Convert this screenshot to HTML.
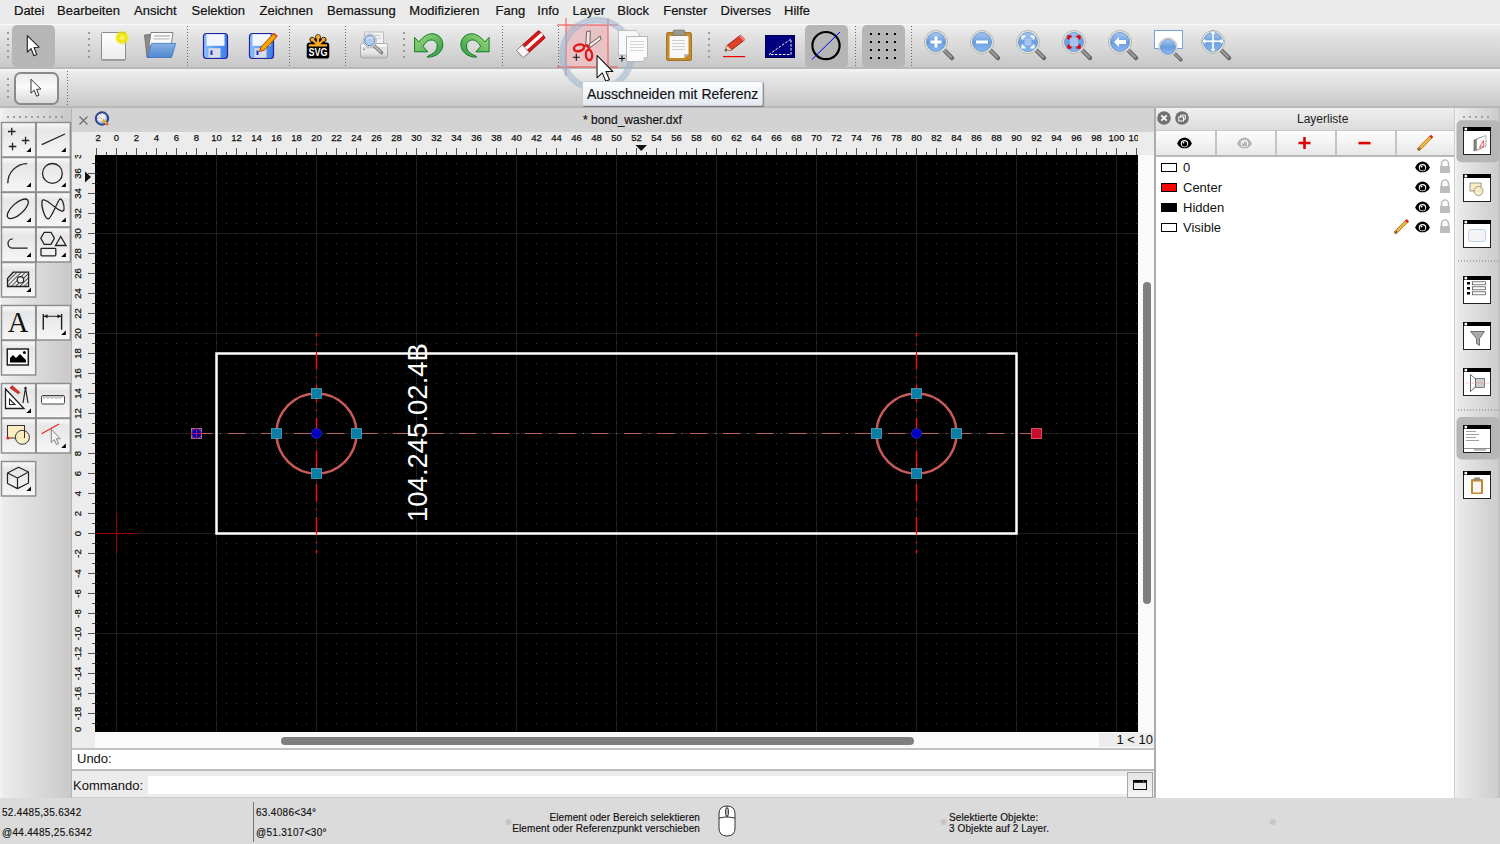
<!DOCTYPE html><html><head><meta charset="utf-8"><title>QCAD</title><style>
*{margin:0;padding:0;box-sizing:border-box}
html,body{width:1500px;height:844px;overflow:hidden;background:#ececec;font-family:"Liberation Sans",sans-serif;color:#1a1a1a}
.a{position:absolute}
.t{position:absolute;white-space:nowrap;line-height:1}
svg{position:absolute;overflow:visible}
</style></head><body>
<div class="a" style="left:0;top:0;width:1500px;height:24px;background:#ebebeb"></div>
<div class="t" style="left:14px;top:4px;font-size:13px;color:#111;-webkit-text-stroke:.2px #111">Datei</div>
<div class="t" style="left:57px;top:4px;font-size:13px;color:#111;-webkit-text-stroke:.2px #111">Bearbeiten</div>
<div class="t" style="left:134px;top:4px;font-size:13px;color:#111;-webkit-text-stroke:.2px #111">Ansicht</div>
<div class="t" style="left:191.5px;top:4px;font-size:13px;color:#111;-webkit-text-stroke:.2px #111">Selektion</div>
<div class="t" style="left:259.5px;top:4px;font-size:13px;color:#111;-webkit-text-stroke:.2px #111">Zeichnen</div>
<div class="t" style="left:327px;top:4px;font-size:13px;color:#111;-webkit-text-stroke:.2px #111">Bemassung</div>
<div class="t" style="left:409.3px;top:4px;font-size:13px;color:#111;-webkit-text-stroke:.2px #111">Modifizieren</div>
<div class="t" style="left:495.5px;top:4px;font-size:13px;color:#111;-webkit-text-stroke:.2px #111">Fang</div>
<div class="t" style="left:537.3px;top:4px;font-size:13px;color:#111;-webkit-text-stroke:.2px #111">Info</div>
<div class="t" style="left:572.5px;top:4px;font-size:13px;color:#111;-webkit-text-stroke:.2px #111">Layer</div>
<div class="t" style="left:617.3px;top:4px;font-size:13px;color:#111;-webkit-text-stroke:.2px #111">Block</div>
<div class="t" style="left:663.2px;top:4px;font-size:13px;color:#111;-webkit-text-stroke:.2px #111">Fenster</div>
<div class="t" style="left:720.5px;top:4px;font-size:13px;color:#111;-webkit-text-stroke:.2px #111">Diverses</div>
<div class="t" style="left:784px;top:4px;font-size:13px;color:#111;-webkit-text-stroke:.2px #111">Hilfe</div>
<div class="a" style="left:0;top:24px;width:1500px;height:45px;background:linear-gradient(#eeeeee,#e3e3e3 25%,#c8c8c8);border-top:1px solid #f8f8f8;border-bottom:2px solid #b9b9b9"></div>
<div class="a" style="left:0;top:69px;width:1500px;height:39px;background:linear-gradient(#f4f4f4,#eaeaea 12%,#c9c9c9);border-bottom:2px solid #b8b8b8"></div>
<div class="a" style="left:0;top:108px;width:72px;height:690px;background:linear-gradient(90deg,#f4f4f4 0,#ececec 4%,#cacaca 97%);border-right:1px solid #b6b6b6"></div>
<div class="a" style="left:72px;top:108px;width:1082px;height:24px;background:#d3d3d3"></div>
<div class="t" style="left:583px;top:114px;font-size:12px;color:#111;-webkit-text-stroke:.15px #111">* bond_washer.dxf</div>
<div class="a" style="left:72px;top:132px;width:1082px;height:23px;background:#ececec"></div>
<div class="a" style="left:72px;top:155px;width:23px;height:593px;background:#ececec"></div>
<div class="a" style="left:1138px;top:155px;width:16px;height:578px;background:#fafafa"></div>
<div class="a" style="left:95px;top:732px;width:1059px;height:17px;background:#fafafa"></div>
<div class="a" style="left:281px;top:737px;width:633px;height:8px;border-radius:4px;background:#7f7f7f"></div>
<div class="a" style="left:1143px;top:282px;width:8px;height:322px;border-radius:4px;background:#7f7f7f"></div>
<div class="a" style="left:1099px;top:733px;width:55px;height:14px;background:#ececec"></div>
<div class="t" style="left:1090px;width:63px;text-align:right;top:733px;font-size:13px;color:#111">1 &lt; 10</div>
<div class="a" style="left:72px;top:748px;width:1082px;height:2px;background:#c2c2c2"></div>
<div class="a" style="left:72px;top:750px;width:1082px;height:21px;background:#fff;border-bottom:2px solid #bdbdbd"></div>
<div class="t" style="left:77px;top:752px;font-size:13px;color:#111">Undo:</div>
<div class="a" style="left:72px;top:771px;width:1082px;height:27px;background:#ececec;border-bottom:1px solid #cbcbcb"></div>
<div class="t" style="left:73px;top:779px;font-size:13px;color:#111">Kommando:</div>
<div class="a" style="left:148px;top:776px;width:979px;height:18px;background:#fff"></div>
<div class="a" style="left:1127px;top:772px;width:26px;height:26px;background:linear-gradient(#e4e4e4,#f4f4f4);border:1.5px solid #a6a6a6"></div>
<div class="a" style="left:1154px;top:108px;width:2px;height:690px;background:#acacac"></div>
<svg class="a" style="left:95px;top:155px;overflow:hidden" width="1043" height="577" viewBox="95 155 1043 577"><defs><pattern id="dots" x="116" y="533" width="10" height="10" patternUnits="userSpaceOnUse"><rect x="0" y="0" width="1" height="1" fill="#3e3e3e"/></pattern></defs><rect x="95" y="155" width="1043" height="577" fill="#000"/><rect x="116" y="155" width="1" height="577" fill="#1c1c1c"/><rect x="216" y="155" width="1" height="577" fill="#1c1c1c"/><rect x="316" y="155" width="1" height="577" fill="#1c1c1c"/><rect x="416" y="155" width="1" height="577" fill="#1c1c1c"/><rect x="516" y="155" width="1" height="577" fill="#1c1c1c"/><rect x="616" y="155" width="1" height="577" fill="#1c1c1c"/><rect x="716" y="155" width="1" height="577" fill="#1c1c1c"/><rect x="816" y="155" width="1" height="577" fill="#1c1c1c"/><rect x="916" y="155" width="1" height="577" fill="#1c1c1c"/><rect x="1016" y="155" width="1" height="577" fill="#1c1c1c"/><rect x="1116" y="155" width="1" height="577" fill="#1c1c1c"/><rect x="95" y="733" width="1043" height="1" fill="#1c1c1c"/><rect x="95" y="633" width="1043" height="1" fill="#1c1c1c"/><rect x="95" y="533" width="1043" height="1" fill="#1c1c1c"/><rect x="95" y="433" width="1043" height="1" fill="#1c1c1c"/><rect x="95" y="333" width="1043" height="1" fill="#1c1c1c"/><rect x="95" y="233" width="1043" height="1" fill="#1c1c1c"/><rect x="95" y="155" width="1043" height="577" fill="url(#dots)"/><rect x="96" y="533" width="40" height="1" fill="#a00000"/><rect x="116" y="513" width="1" height="40" fill="#a00000"/><rect x="216.5" y="353.5" width="800" height="180" fill="none" stroke="#fff" stroke-width="2.5"/><line x1="196" y1="433.5" x2="1036" y2="433.5" stroke="#b86262" stroke-width="1.1" stroke-dasharray="17.6,7.2,1.2,7" stroke-dashoffset="1"/><line x1="316.5" y1="333" x2="316.5" y2="553" stroke="#ff1010" stroke-width="1.4" stroke-dasharray="17.6,7.2,1.2,7" stroke-dashoffset="14"/><circle cx="316.5" cy="433.5" r="40" fill="none" stroke="#c85a5a" stroke-width="2.5"/><rect x="271.5" y="428.5" width="10" height="10" fill="#0a7fa8" stroke="#5aa0b8" stroke-width="0.8"/><rect x="351.5" y="428.5" width="10" height="10" fill="#0a7fa8" stroke="#5aa0b8" stroke-width="0.8"/><rect x="311.5" y="388.5" width="10" height="10" fill="#0a7fa8" stroke="#5aa0b8" stroke-width="0.8"/><rect x="311.5" y="468.5" width="10" height="10" fill="#0a7fa8" stroke="#5aa0b8" stroke-width="0.8"/><circle cx="316.5" cy="433.5" r="5" fill="#0000c0" stroke="#3a3ae0" stroke-width="0.6"/><line x1="916.5" y1="333" x2="916.5" y2="553" stroke="#ff1010" stroke-width="1.4" stroke-dasharray="17.6,7.2,1.2,7" stroke-dashoffset="14"/><circle cx="916.5" cy="433.5" r="40" fill="none" stroke="#c85a5a" stroke-width="2.5"/><rect x="871.5" y="428.5" width="10" height="10" fill="#0a7fa8" stroke="#5aa0b8" stroke-width="0.8"/><rect x="951.5" y="428.5" width="10" height="10" fill="#0a7fa8" stroke="#5aa0b8" stroke-width="0.8"/><rect x="911.5" y="388.5" width="10" height="10" fill="#0a7fa8" stroke="#5aa0b8" stroke-width="0.8"/><rect x="911.5" y="468.5" width="10" height="10" fill="#0a7fa8" stroke="#5aa0b8" stroke-width="0.8"/><circle cx="916.5" cy="433.5" r="5" fill="#0000c0" stroke="#3a3ae0" stroke-width="0.6"/><rect x="191.5" y="428.5" width="10" height="10" fill="#0000c0" stroke="#8a92c8" stroke-width="0.9"/><circle cx="196.5" cy="433.5" r="5" fill="none" stroke="#e02828" stroke-width="1"/><path d="M196.5 429v9M192 433.5h9" stroke="#a81060" stroke-width="1"/><rect x="1031.5" y="428.5" width="10" height="10" fill="#c8102e" stroke="#d85060" stroke-width="1"/><text transform="translate(427,522) rotate(-90)" font-family="Liberation Sans" font-size="27.5" fill="#fff">104.245.02.4B</text></svg>
<svg class="a" style="left:95px;top:132px;overflow:hidden" width="1043" height="23" viewBox="95 132 1043 23"><rect x="76.0" y="148" width="1" height="7" fill="#555"/><text x="76.5" y="141" font-size="9.5" text-anchor="middle" fill="#111" stroke="#111" stroke-width=".25">-4</text><rect x="86.0" y="152" width="1" height="3" fill="#555"/><rect x="96.0" y="148" width="1" height="7" fill="#555"/><text x="96.5" y="141" font-size="9.5" text-anchor="middle" fill="#111" stroke="#111" stroke-width=".25">-2</text><rect x="106.0" y="152" width="1" height="3" fill="#555"/><rect x="116.0" y="148" width="1" height="7" fill="#555"/><text x="116.5" y="141" font-size="9.5" text-anchor="middle" fill="#111" stroke="#111" stroke-width=".25">0</text><rect x="126.0" y="152" width="1" height="3" fill="#555"/><rect x="136.0" y="148" width="1" height="7" fill="#555"/><text x="136.5" y="141" font-size="9.5" text-anchor="middle" fill="#111" stroke="#111" stroke-width=".25">2</text><rect x="146.0" y="152" width="1" height="3" fill="#555"/><rect x="156.0" y="148" width="1" height="7" fill="#555"/><text x="156.5" y="141" font-size="9.5" text-anchor="middle" fill="#111" stroke="#111" stroke-width=".25">4</text><rect x="166.0" y="152" width="1" height="3" fill="#555"/><rect x="176.0" y="148" width="1" height="7" fill="#555"/><text x="176.5" y="141" font-size="9.5" text-anchor="middle" fill="#111" stroke="#111" stroke-width=".25">6</text><rect x="186.0" y="152" width="1" height="3" fill="#555"/><rect x="196.0" y="148" width="1" height="7" fill="#555"/><text x="196.5" y="141" font-size="9.5" text-anchor="middle" fill="#111" stroke="#111" stroke-width=".25">8</text><rect x="206.0" y="152" width="1" height="3" fill="#555"/><rect x="216.0" y="148" width="1" height="7" fill="#555"/><text x="216.5" y="141" font-size="9.5" text-anchor="middle" fill="#111" stroke="#111" stroke-width=".25">10</text><rect x="226.0" y="152" width="1" height="3" fill="#555"/><rect x="236.0" y="148" width="1" height="7" fill="#555"/><text x="236.5" y="141" font-size="9.5" text-anchor="middle" fill="#111" stroke="#111" stroke-width=".25">12</text><rect x="246.0" y="152" width="1" height="3" fill="#555"/><rect x="256.0" y="148" width="1" height="7" fill="#555"/><text x="256.5" y="141" font-size="9.5" text-anchor="middle" fill="#111" stroke="#111" stroke-width=".25">14</text><rect x="266.0" y="152" width="1" height="3" fill="#555"/><rect x="276.0" y="148" width="1" height="7" fill="#555"/><text x="276.5" y="141" font-size="9.5" text-anchor="middle" fill="#111" stroke="#111" stroke-width=".25">16</text><rect x="286.0" y="152" width="1" height="3" fill="#555"/><rect x="296.0" y="148" width="1" height="7" fill="#555"/><text x="296.5" y="141" font-size="9.5" text-anchor="middle" fill="#111" stroke="#111" stroke-width=".25">18</text><rect x="306.0" y="152" width="1" height="3" fill="#555"/><rect x="316.0" y="148" width="1" height="7" fill="#555"/><text x="316.5" y="141" font-size="9.5" text-anchor="middle" fill="#111" stroke="#111" stroke-width=".25">20</text><rect x="326.0" y="152" width="1" height="3" fill="#555"/><rect x="336.0" y="148" width="1" height="7" fill="#555"/><text x="336.5" y="141" font-size="9.5" text-anchor="middle" fill="#111" stroke="#111" stroke-width=".25">22</text><rect x="346.0" y="152" width="1" height="3" fill="#555"/><rect x="356.0" y="148" width="1" height="7" fill="#555"/><text x="356.5" y="141" font-size="9.5" text-anchor="middle" fill="#111" stroke="#111" stroke-width=".25">24</text><rect x="366.0" y="152" width="1" height="3" fill="#555"/><rect x="376.0" y="148" width="1" height="7" fill="#555"/><text x="376.5" y="141" font-size="9.5" text-anchor="middle" fill="#111" stroke="#111" stroke-width=".25">26</text><rect x="386.0" y="152" width="1" height="3" fill="#555"/><rect x="396.0" y="148" width="1" height="7" fill="#555"/><text x="396.5" y="141" font-size="9.5" text-anchor="middle" fill="#111" stroke="#111" stroke-width=".25">28</text><rect x="406.0" y="152" width="1" height="3" fill="#555"/><rect x="416.0" y="148" width="1" height="7" fill="#555"/><text x="416.5" y="141" font-size="9.5" text-anchor="middle" fill="#111" stroke="#111" stroke-width=".25">30</text><rect x="426.0" y="152" width="1" height="3" fill="#555"/><rect x="436.0" y="148" width="1" height="7" fill="#555"/><text x="436.5" y="141" font-size="9.5" text-anchor="middle" fill="#111" stroke="#111" stroke-width=".25">32</text><rect x="446.0" y="152" width="1" height="3" fill="#555"/><rect x="456.0" y="148" width="1" height="7" fill="#555"/><text x="456.5" y="141" font-size="9.5" text-anchor="middle" fill="#111" stroke="#111" stroke-width=".25">34</text><rect x="466.0" y="152" width="1" height="3" fill="#555"/><rect x="476.0" y="148" width="1" height="7" fill="#555"/><text x="476.5" y="141" font-size="9.5" text-anchor="middle" fill="#111" stroke="#111" stroke-width=".25">36</text><rect x="486.0" y="152" width="1" height="3" fill="#555"/><rect x="496.0" y="148" width="1" height="7" fill="#555"/><text x="496.5" y="141" font-size="9.5" text-anchor="middle" fill="#111" stroke="#111" stroke-width=".25">38</text><rect x="506.0" y="152" width="1" height="3" fill="#555"/><rect x="516.0" y="148" width="1" height="7" fill="#555"/><text x="516.5" y="141" font-size="9.5" text-anchor="middle" fill="#111" stroke="#111" stroke-width=".25">40</text><rect x="526.0" y="152" width="1" height="3" fill="#555"/><rect x="536.0" y="148" width="1" height="7" fill="#555"/><text x="536.5" y="141" font-size="9.5" text-anchor="middle" fill="#111" stroke="#111" stroke-width=".25">42</text><rect x="546.0" y="152" width="1" height="3" fill="#555"/><rect x="556.0" y="148" width="1" height="7" fill="#555"/><text x="556.5" y="141" font-size="9.5" text-anchor="middle" fill="#111" stroke="#111" stroke-width=".25">44</text><rect x="566.0" y="152" width="1" height="3" fill="#555"/><rect x="576.0" y="148" width="1" height="7" fill="#555"/><text x="576.5" y="141" font-size="9.5" text-anchor="middle" fill="#111" stroke="#111" stroke-width=".25">46</text><rect x="586.0" y="152" width="1" height="3" fill="#555"/><rect x="596.0" y="148" width="1" height="7" fill="#555"/><text x="596.5" y="141" font-size="9.5" text-anchor="middle" fill="#111" stroke="#111" stroke-width=".25">48</text><rect x="606.0" y="152" width="1" height="3" fill="#555"/><rect x="616.0" y="148" width="1" height="7" fill="#555"/><text x="616.5" y="141" font-size="9.5" text-anchor="middle" fill="#111" stroke="#111" stroke-width=".25">50</text><rect x="626.0" y="152" width="1" height="3" fill="#555"/><rect x="636.0" y="148" width="1" height="7" fill="#555"/><text x="636.5" y="141" font-size="9.5" text-anchor="middle" fill="#111" stroke="#111" stroke-width=".25">52</text><rect x="646.0" y="152" width="1" height="3" fill="#555"/><rect x="656.0" y="148" width="1" height="7" fill="#555"/><text x="656.5" y="141" font-size="9.5" text-anchor="middle" fill="#111" stroke="#111" stroke-width=".25">54</text><rect x="666.0" y="152" width="1" height="3" fill="#555"/><rect x="676.0" y="148" width="1" height="7" fill="#555"/><text x="676.5" y="141" font-size="9.5" text-anchor="middle" fill="#111" stroke="#111" stroke-width=".25">56</text><rect x="686.0" y="152" width="1" height="3" fill="#555"/><rect x="696.0" y="148" width="1" height="7" fill="#555"/><text x="696.5" y="141" font-size="9.5" text-anchor="middle" fill="#111" stroke="#111" stroke-width=".25">58</text><rect x="706.0" y="152" width="1" height="3" fill="#555"/><rect x="716.0" y="148" width="1" height="7" fill="#555"/><text x="716.5" y="141" font-size="9.5" text-anchor="middle" fill="#111" stroke="#111" stroke-width=".25">60</text><rect x="726.0" y="152" width="1" height="3" fill="#555"/><rect x="736.0" y="148" width="1" height="7" fill="#555"/><text x="736.5" y="141" font-size="9.5" text-anchor="middle" fill="#111" stroke="#111" stroke-width=".25">62</text><rect x="746.0" y="152" width="1" height="3" fill="#555"/><rect x="756.0" y="148" width="1" height="7" fill="#555"/><text x="756.5" y="141" font-size="9.5" text-anchor="middle" fill="#111" stroke="#111" stroke-width=".25">64</text><rect x="766.0" y="152" width="1" height="3" fill="#555"/><rect x="776.0" y="148" width="1" height="7" fill="#555"/><text x="776.5" y="141" font-size="9.5" text-anchor="middle" fill="#111" stroke="#111" stroke-width=".25">66</text><rect x="786.0" y="152" width="1" height="3" fill="#555"/><rect x="796.0" y="148" width="1" height="7" fill="#555"/><text x="796.5" y="141" font-size="9.5" text-anchor="middle" fill="#111" stroke="#111" stroke-width=".25">68</text><rect x="806.0" y="152" width="1" height="3" fill="#555"/><rect x="816.0" y="148" width="1" height="7" fill="#555"/><text x="816.5" y="141" font-size="9.5" text-anchor="middle" fill="#111" stroke="#111" stroke-width=".25">70</text><rect x="826.0" y="152" width="1" height="3" fill="#555"/><rect x="836.0" y="148" width="1" height="7" fill="#555"/><text x="836.5" y="141" font-size="9.5" text-anchor="middle" fill="#111" stroke="#111" stroke-width=".25">72</text><rect x="846.0" y="152" width="1" height="3" fill="#555"/><rect x="856.0" y="148" width="1" height="7" fill="#555"/><text x="856.5" y="141" font-size="9.5" text-anchor="middle" fill="#111" stroke="#111" stroke-width=".25">74</text><rect x="866.0" y="152" width="1" height="3" fill="#555"/><rect x="876.0" y="148" width="1" height="7" fill="#555"/><text x="876.5" y="141" font-size="9.5" text-anchor="middle" fill="#111" stroke="#111" stroke-width=".25">76</text><rect x="886.0" y="152" width="1" height="3" fill="#555"/><rect x="896.0" y="148" width="1" height="7" fill="#555"/><text x="896.5" y="141" font-size="9.5" text-anchor="middle" fill="#111" stroke="#111" stroke-width=".25">78</text><rect x="906.0" y="152" width="1" height="3" fill="#555"/><rect x="916.0" y="148" width="1" height="7" fill="#555"/><text x="916.5" y="141" font-size="9.5" text-anchor="middle" fill="#111" stroke="#111" stroke-width=".25">80</text><rect x="926.0" y="152" width="1" height="3" fill="#555"/><rect x="936.0" y="148" width="1" height="7" fill="#555"/><text x="936.5" y="141" font-size="9.5" text-anchor="middle" fill="#111" stroke="#111" stroke-width=".25">82</text><rect x="946.0" y="152" width="1" height="3" fill="#555"/><rect x="956.0" y="148" width="1" height="7" fill="#555"/><text x="956.5" y="141" font-size="9.5" text-anchor="middle" fill="#111" stroke="#111" stroke-width=".25">84</text><rect x="966.0" y="152" width="1" height="3" fill="#555"/><rect x="976.0" y="148" width="1" height="7" fill="#555"/><text x="976.5" y="141" font-size="9.5" text-anchor="middle" fill="#111" stroke="#111" stroke-width=".25">86</text><rect x="986.0" y="152" width="1" height="3" fill="#555"/><rect x="996.0" y="148" width="1" height="7" fill="#555"/><text x="996.5" y="141" font-size="9.5" text-anchor="middle" fill="#111" stroke="#111" stroke-width=".25">88</text><rect x="1006.0" y="152" width="1" height="3" fill="#555"/><rect x="1016.0" y="148" width="1" height="7" fill="#555"/><text x="1016.5" y="141" font-size="9.5" text-anchor="middle" fill="#111" stroke="#111" stroke-width=".25">90</text><rect x="1026.0" y="152" width="1" height="3" fill="#555"/><rect x="1036.0" y="148" width="1" height="7" fill="#555"/><text x="1036.5" y="141" font-size="9.5" text-anchor="middle" fill="#111" stroke="#111" stroke-width=".25">92</text><rect x="1046.0" y="152" width="1" height="3" fill="#555"/><rect x="1056.0" y="148" width="1" height="7" fill="#555"/><text x="1056.5" y="141" font-size="9.5" text-anchor="middle" fill="#111" stroke="#111" stroke-width=".25">94</text><rect x="1066.0" y="152" width="1" height="3" fill="#555"/><rect x="1076.0" y="148" width="1" height="7" fill="#555"/><text x="1076.5" y="141" font-size="9.5" text-anchor="middle" fill="#111" stroke="#111" stroke-width=".25">96</text><rect x="1086.0" y="152" width="1" height="3" fill="#555"/><rect x="1096.0" y="148" width="1" height="7" fill="#555"/><text x="1096.5" y="141" font-size="9.5" text-anchor="middle" fill="#111" stroke="#111" stroke-width=".25">98</text><rect x="1106.0" y="152" width="1" height="3" fill="#555"/><rect x="1116.0" y="148" width="1" height="7" fill="#555"/><text x="1116.5" y="141" font-size="9.5" text-anchor="middle" fill="#111" stroke="#111" stroke-width=".25">100</text><rect x="1126.0" y="152" width="1" height="3" fill="#555"/><rect x="1136.0" y="148" width="1" height="7" fill="#555"/><text x="1136.5" y="141" font-size="9.5" text-anchor="middle" fill="#111" stroke="#111" stroke-width=".25">102</text><rect x="1146.0" y="152" width="1" height="3" fill="#555"/><rect x="1156.0" y="148" width="1" height="7" fill="#555"/><text x="1156.5" y="141" font-size="9.5" text-anchor="middle" fill="#111" stroke="#111" stroke-width=".25">104</text><rect x="1166.0" y="152" width="1" height="3" fill="#555"/></svg><svg class="a" style="left:72px;top:155px;overflow:hidden" width="23" height="577" viewBox="72 155 23 577"><rect x="88" y="773.0" width="7" height="1" fill="#555"/><text transform="translate(81,773.5) rotate(-90)" font-size="9.5" text-anchor="middle" fill="#111" stroke="#111" stroke-width=".25">-24</text><rect x="92" y="763.0" width="3" height="1" fill="#555"/><rect x="88" y="753.0" width="7" height="1" fill="#555"/><text transform="translate(81,753.5) rotate(-90)" font-size="9.5" text-anchor="middle" fill="#111" stroke="#111" stroke-width=".25">-22</text><rect x="92" y="743.0" width="3" height="1" fill="#555"/><rect x="88" y="733.0" width="7" height="1" fill="#555"/><text transform="translate(81,733.5) rotate(-90)" font-size="9.5" text-anchor="middle" fill="#111" stroke="#111" stroke-width=".25">-20</text><rect x="92" y="723.0" width="3" height="1" fill="#555"/><rect x="88" y="713.0" width="7" height="1" fill="#555"/><text transform="translate(81,713.5) rotate(-90)" font-size="9.5" text-anchor="middle" fill="#111" stroke="#111" stroke-width=".25">-18</text><rect x="92" y="703.0" width="3" height="1" fill="#555"/><rect x="88" y="693.0" width="7" height="1" fill="#555"/><text transform="translate(81,693.5) rotate(-90)" font-size="9.5" text-anchor="middle" fill="#111" stroke="#111" stroke-width=".25">-16</text><rect x="92" y="683.0" width="3" height="1" fill="#555"/><rect x="88" y="673.0" width="7" height="1" fill="#555"/><text transform="translate(81,673.5) rotate(-90)" font-size="9.5" text-anchor="middle" fill="#111" stroke="#111" stroke-width=".25">-14</text><rect x="92" y="663.0" width="3" height="1" fill="#555"/><rect x="88" y="653.0" width="7" height="1" fill="#555"/><text transform="translate(81,653.5) rotate(-90)" font-size="9.5" text-anchor="middle" fill="#111" stroke="#111" stroke-width=".25">-12</text><rect x="92" y="643.0" width="3" height="1" fill="#555"/><rect x="88" y="633.0" width="7" height="1" fill="#555"/><text transform="translate(81,633.5) rotate(-90)" font-size="9.5" text-anchor="middle" fill="#111" stroke="#111" stroke-width=".25">-10</text><rect x="92" y="623.0" width="3" height="1" fill="#555"/><rect x="88" y="613.0" width="7" height="1" fill="#555"/><text transform="translate(81,613.5) rotate(-90)" font-size="9.5" text-anchor="middle" fill="#111" stroke="#111" stroke-width=".25">-8</text><rect x="92" y="603.0" width="3" height="1" fill="#555"/><rect x="88" y="593.0" width="7" height="1" fill="#555"/><text transform="translate(81,593.5) rotate(-90)" font-size="9.5" text-anchor="middle" fill="#111" stroke="#111" stroke-width=".25">-6</text><rect x="92" y="583.0" width="3" height="1" fill="#555"/><rect x="88" y="573.0" width="7" height="1" fill="#555"/><text transform="translate(81,573.5) rotate(-90)" font-size="9.5" text-anchor="middle" fill="#111" stroke="#111" stroke-width=".25">-4</text><rect x="92" y="563.0" width="3" height="1" fill="#555"/><rect x="88" y="553.0" width="7" height="1" fill="#555"/><text transform="translate(81,553.5) rotate(-90)" font-size="9.5" text-anchor="middle" fill="#111" stroke="#111" stroke-width=".25">-2</text><rect x="92" y="543.0" width="3" height="1" fill="#555"/><rect x="88" y="533.0" width="7" height="1" fill="#555"/><text transform="translate(81,533.5) rotate(-90)" font-size="9.5" text-anchor="middle" fill="#111" stroke="#111" stroke-width=".25">0</text><rect x="92" y="523.0" width="3" height="1" fill="#555"/><rect x="88" y="513.0" width="7" height="1" fill="#555"/><text transform="translate(81,513.5) rotate(-90)" font-size="9.5" text-anchor="middle" fill="#111" stroke="#111" stroke-width=".25">2</text><rect x="92" y="503.0" width="3" height="1" fill="#555"/><rect x="88" y="493.0" width="7" height="1" fill="#555"/><text transform="translate(81,493.5) rotate(-90)" font-size="9.5" text-anchor="middle" fill="#111" stroke="#111" stroke-width=".25">4</text><rect x="92" y="483.0" width="3" height="1" fill="#555"/><rect x="88" y="473.0" width="7" height="1" fill="#555"/><text transform="translate(81,473.5) rotate(-90)" font-size="9.5" text-anchor="middle" fill="#111" stroke="#111" stroke-width=".25">6</text><rect x="92" y="463.0" width="3" height="1" fill="#555"/><rect x="88" y="453.0" width="7" height="1" fill="#555"/><text transform="translate(81,453.5) rotate(-90)" font-size="9.5" text-anchor="middle" fill="#111" stroke="#111" stroke-width=".25">8</text><rect x="92" y="443.0" width="3" height="1" fill="#555"/><rect x="88" y="433.0" width="7" height="1" fill="#555"/><text transform="translate(81,433.5) rotate(-90)" font-size="9.5" text-anchor="middle" fill="#111" stroke="#111" stroke-width=".25">10</text><rect x="92" y="423.0" width="3" height="1" fill="#555"/><rect x="88" y="413.0" width="7" height="1" fill="#555"/><text transform="translate(81,413.5) rotate(-90)" font-size="9.5" text-anchor="middle" fill="#111" stroke="#111" stroke-width=".25">12</text><rect x="92" y="403.0" width="3" height="1" fill="#555"/><rect x="88" y="393.0" width="7" height="1" fill="#555"/><text transform="translate(81,393.5) rotate(-90)" font-size="9.5" text-anchor="middle" fill="#111" stroke="#111" stroke-width=".25">14</text><rect x="92" y="383.0" width="3" height="1" fill="#555"/><rect x="88" y="373.0" width="7" height="1" fill="#555"/><text transform="translate(81,373.5) rotate(-90)" font-size="9.5" text-anchor="middle" fill="#111" stroke="#111" stroke-width=".25">16</text><rect x="92" y="363.0" width="3" height="1" fill="#555"/><rect x="88" y="353.0" width="7" height="1" fill="#555"/><text transform="translate(81,353.5) rotate(-90)" font-size="9.5" text-anchor="middle" fill="#111" stroke="#111" stroke-width=".25">18</text><rect x="92" y="343.0" width="3" height="1" fill="#555"/><rect x="88" y="333.0" width="7" height="1" fill="#555"/><text transform="translate(81,333.5) rotate(-90)" font-size="9.5" text-anchor="middle" fill="#111" stroke="#111" stroke-width=".25">20</text><rect x="92" y="323.0" width="3" height="1" fill="#555"/><rect x="88" y="313.0" width="7" height="1" fill="#555"/><text transform="translate(81,313.5) rotate(-90)" font-size="9.5" text-anchor="middle" fill="#111" stroke="#111" stroke-width=".25">22</text><rect x="92" y="303.0" width="3" height="1" fill="#555"/><rect x="88" y="293.0" width="7" height="1" fill="#555"/><text transform="translate(81,293.5) rotate(-90)" font-size="9.5" text-anchor="middle" fill="#111" stroke="#111" stroke-width=".25">24</text><rect x="92" y="283.0" width="3" height="1" fill="#555"/><rect x="88" y="273.0" width="7" height="1" fill="#555"/><text transform="translate(81,273.5) rotate(-90)" font-size="9.5" text-anchor="middle" fill="#111" stroke="#111" stroke-width=".25">26</text><rect x="92" y="263.0" width="3" height="1" fill="#555"/><rect x="88" y="253.0" width="7" height="1" fill="#555"/><text transform="translate(81,253.5) rotate(-90)" font-size="9.5" text-anchor="middle" fill="#111" stroke="#111" stroke-width=".25">28</text><rect x="92" y="243.0" width="3" height="1" fill="#555"/><rect x="88" y="233.0" width="7" height="1" fill="#555"/><text transform="translate(81,233.5) rotate(-90)" font-size="9.5" text-anchor="middle" fill="#111" stroke="#111" stroke-width=".25">30</text><rect x="92" y="223.0" width="3" height="1" fill="#555"/><rect x="88" y="213.0" width="7" height="1" fill="#555"/><text transform="translate(81,213.5) rotate(-90)" font-size="9.5" text-anchor="middle" fill="#111" stroke="#111" stroke-width=".25">32</text><rect x="92" y="203.0" width="3" height="1" fill="#555"/><rect x="88" y="193.0" width="7" height="1" fill="#555"/><text transform="translate(81,193.5) rotate(-90)" font-size="9.5" text-anchor="middle" fill="#111" stroke="#111" stroke-width=".25">34</text><rect x="92" y="183.0" width="3" height="1" fill="#555"/><rect x="88" y="173.0" width="7" height="1" fill="#555"/><text transform="translate(81,173.5) rotate(-90)" font-size="9.5" text-anchor="middle" fill="#111" stroke="#111" stroke-width=".25">36</text><rect x="92" y="163.0" width="3" height="1" fill="#555"/><rect x="88" y="153.0" width="7" height="1" fill="#555"/><text transform="translate(81,153.5) rotate(-90)" font-size="9.5" text-anchor="middle" fill="#111" stroke="#111" stroke-width=".25">38</text><rect x="92" y="143.0" width="3" height="1" fill="#555"/></svg><svg class="a" style="left:0;top:0" width="1500" height="844"><path d="M635.5 145h11.5l-5.75 6z" fill="#111"/><path d="M85 171.5v11l6-5.5z" fill="#111"/></svg>
<div class="a" style="left:0;top:798px;width:1500px;height:46px;background:#dbdbdb"></div>
<div class="t" style="left:2px;top:808px;font-size:10px;letter-spacing:.3px;color:#111;-webkit-text-stroke:.15px #111">52.4485,35.6342</div>
<div class="t" style="left:2px;top:828px;font-size:10px;letter-spacing:.3px;color:#111;-webkit-text-stroke:.15px #111">@44.4485,25.6342</div>
<div class="t" style="left:256px;top:808px;font-size:10px;letter-spacing:.3px;color:#111;-webkit-text-stroke:.15px #111">63.4086&lt;34°</div>
<div class="t" style="left:256px;top:828px;font-size:10px;letter-spacing:.3px;color:#111;-webkit-text-stroke:.15px #111">@51.3107&lt;30°</div>
<div class="a" style="left:253px;top:802px;width:1px;height:40px;background:#777"></div>
<div class="t" style="left:400px;top:812px;width:300px;text-align:right;font-size:10px;line-height:11px;letter-spacing:.1px;color:#111;-webkit-text-stroke:.15px #111">Element oder Bereich selektieren<br>Element oder Referenzpunkt verschieben</div>
<div class="t" style="left:949px;top:812px;font-size:10px;line-height:11px;letter-spacing:.1px;color:#111;-webkit-text-stroke:.15px #111">Selektierte Objekte:<br>3 Objekte auf 2 Layer.</div>
<div class="a" style="left:1156px;top:108px;width:298px;height:690px;background:#fff"></div>
<div class="a" style="left:1156px;top:108px;width:298px;height:22px;background:linear-gradient(#efefef,#dcdcdc)"></div>
<div class="t" style="left:1297px;top:113px;font-size:12px;color:#222">Layerliste</div>
<div class="a" style="left:1156px;top:130px;width:298px;height:27px;background:linear-gradient(#fdfdfd,#e8e8e8);border-bottom:2px solid #b8b8b8;border-top:1px solid #c8c8c8"></div>
<div class="a" style="left:1215px;top:130px;width:2px;height:25px;background:#c4c4c4"></div>
<div class="a" style="left:1275px;top:130px;width:2px;height:25px;background:#c4c4c4"></div>
<div class="a" style="left:1335px;top:130px;width:2px;height:25px;background:#c4c4c4"></div>
<div class="a" style="left:1395px;top:130px;width:2px;height:25px;background:#c4c4c4"></div>
<div class="a" style="left:1161px;top:163px;width:16px;height:9px;background:#fff;border:1px solid #000"></div>
<div class="t" style="left:1183px;top:161px;font-size:13px;color:#111">0</div>
<div class="a" style="left:1161px;top:183px;width:16px;height:9px;background:#f00;border:1px solid #000"></div>
<div class="t" style="left:1183px;top:181px;font-size:13px;color:#111">Center</div>
<div class="a" style="left:1161px;top:203px;width:16px;height:9px;background:#000;border:1px solid #000"></div>
<div class="t" style="left:1183px;top:201px;font-size:13px;color:#111">Hidden</div>
<div class="a" style="left:1161px;top:223px;width:16px;height:9px;background:#fff;border:1px solid #000"></div>
<div class="t" style="left:1183px;top:221px;font-size:13px;color:#111">Visible</div>
<div class="a" style="left:1454px;top:108px;width:46px;height:690px;background:linear-gradient(90deg,#f4f4f4 0,#eaeaea 6%,#cccccc 96.5%,#bcbcbc 97%,#bcbcbc 100%);border-left:1px solid #cdcdcd"></div>
<svg class="a" style="left:0;top:0;pointer-events:none" width="1500" height="844" viewBox="0 0 1500 844"><defs><linearGradient id="gMag" x1="0" y1="0" x2="0" y2="1"><stop offset="0" stop-color="#a8c8f0"/><stop offset=".5" stop-color="#6a9ee0"/><stop offset="1" stop-color="#8ab8f0"/></linearGradient><linearGradient id="gGreen" x1="0" y1="0" x2="1" y2="1"><stop offset="0" stop-color="#a0dc80"/><stop offset="1" stop-color="#2f9a3e"/></linearGradient><linearGradient id="gPage" x1="0" y1="0" x2="0" y2="1"><stop offset="0" stop-color="#fff"/><stop offset="1" stop-color="#ececec"/></linearGradient><linearGradient id="gFolder" x1="0" y1="0" x2="0" y2="1"><stop offset="0" stop-color="#8ab2e4"/><stop offset="1" stop-color="#4f86d0"/></linearGradient><linearGradient id="gFloppy" x1="0" y1="0" x2="1" y2="0"><stop offset="0" stop-color="#8ec0ff"/><stop offset=".5" stop-color="#5b9af2"/><stop offset="1" stop-color="#3f7fe8"/></linearGradient><radialGradient id="gGlow"><stop offset="0" stop-color="#fffff0"/><stop offset=".2" stop-color="#f8f040"/><stop offset=".6" stop-color="#eee400"/><stop offset="1" stop-color="#f0e800" stop-opacity="0"/></radialGradient><linearGradient id="gBtn2" x1="0" y1="0" x2="0" y2="1"><stop offset="0" stop-color="#ebebeb"/><stop offset=".45" stop-color="#fafafa"/><stop offset="1" stop-color="#d8d8d8"/></linearGradient></defs><rect x="7" y="32" width="2" height="2" fill="#9a9a9a"/><rect x="7" y="38" width="2" height="2" fill="#9a9a9a"/><rect x="7" y="44" width="2" height="2" fill="#9a9a9a"/><rect x="7" y="50" width="2" height="2" fill="#9a9a9a"/><rect x="7" y="56" width="2" height="2" fill="#9a9a9a"/><rect x="12" y="25" width="43" height="42.5" rx="5" fill="#b6b6b6"/><path d="M27.30,35.60 L27.30,52.10 L31.10,48.60 L33.90,55.80 L36.70,54.60 L34.10,47.50 L39.10,47.20 Z" fill="#fff" stroke="#222" stroke-width="1.10" stroke-linejoin="round"/><rect x="88" y="32" width="2" height="2" fill="#9a9a9a"/><rect x="88" y="38" width="2" height="2" fill="#9a9a9a"/><rect x="88" y="44" width="2" height="2" fill="#9a9a9a"/><rect x="88" y="50" width="2" height="2" fill="#9a9a9a"/><rect x="88" y="56" width="2" height="2" fill="#9a9a9a"/><rect x="101.5" y="32.5" width="24" height="27.5" rx="1" fill="url(#gPage)" stroke="#8a8a8a" stroke-width="1"/><rect x="102" y="59" width="23" height="1.6" fill="#9a9a9a"/><circle cx="122" cy="37.7" r="7.5" fill="url(#gGlow)"/><path d="M144.5,35 L150,34.5 L152,57.5 L147,57.5 Z" fill="#8a8a8a" stroke="#6a6a6a" stroke-width="0.8"/><path d="M151,32.5 L173,32.5 L171,46 L149,46 Z" fill="#fafafa" stroke="#777" stroke-width="0.9"/><rect x="154" y="35.2" width="16" height="1.4" fill="#b8b8b8"/><rect x="153.5" y="38.2" width="16" height="1.4" fill="#c8c8c8"/><path d="M151.5,43.4 L175.7,43.4 L171.5,57.5 L147.2,57.5 Z" fill="url(#gFolder)" stroke="#3f74c0" stroke-width="0.8"/><line x1="187.5" y1="26" x2="187.5" y2="66" stroke="#6a6a6a" stroke-width="1" stroke-dasharray="1,2"/><rect x="203.5" y="33.5" width="24" height="25" rx="3" fill="url(#gFloppy)" stroke="#24249a" stroke-width="1.2"/><rect x="206.5" y="34.2" width="18" height="11.6" fill="#f2f6ff"/><rect x="208.5" y="48.2" width="12" height="9.5" fill="#dcdce6"/><rect x="210.5" y="50.5" width="2" height="4.5" fill="#1030d0"/><line x1="289.5" y1="26" x2="289.5" y2="66" stroke="#6a6a6a" stroke-width="1" stroke-dasharray="1,2"/><rect x="249.5" y="33.5" width="24" height="25" rx="3" fill="url(#gFloppy)" stroke="#24249a" stroke-width="1.2"/><rect x="252.5" y="34.2" width="18" height="11.6" fill="#f2f6ff"/><rect x="254.5" y="48.2" width="12" height="9.5" fill="#dcdce6"/><rect x="256.5" y="50.5" width="2" height="4.5" fill="#1030d0"/><path d="M259.5,51.5 L261,47 L273.5,33.5 L277,36.5 L264.5,50 Z" fill="#f6a800" stroke="#a83000" stroke-width="0.9"/><path d="M273.5,33.5 L277,36.5" stroke="#e84a30" stroke-width="2.2"/><g stroke="#000" stroke-width="5.4" stroke-linecap="round" fill="#000"><path d="M318,45 L318,37 M318,45 L312.3,39.6 M318,45 L323.7,39.6 M309.5,45.3 L326.5,45.3"/></g><path d="M307.5,46 Q307.5,44 309.5,44 L326.5,44 Q328.5,44 328.5,46 L328.5,56 Q328.5,57.8 326.5,57.8 L309.5,57.8 Q307.5,57.8 307.5,56 Z" fill="#000" stroke="#000" stroke-width="1.5"/><g stroke="#f7a828" stroke-width="2.2" stroke-linecap="round"><path d="M318,45 L318,37.5 M318,45 L312.8,40 M318,45 L323.2,40 M309.8,45.4 L326.2,45.4"/></g><circle cx="318" cy="37" r="2.2" fill="#f7a828"/><circle cx="312.4" cy="39.6" r="2" fill="#f7a828"/><circle cx="323.6" cy="39.6" r="2" fill="#f7a828"/><text x="318" y="56" font-family="Liberation Sans" font-weight="bold" font-size="11" text-anchor="middle" fill="#fff" textLength="19" lengthAdjust="spacingAndGlyphs">SVG</text><line x1="345.5" y1="26" x2="345.5" y2="66" stroke="#6a6a6a" stroke-width="1" stroke-dasharray="1,2"/><defs><linearGradient id="gPr" x1="0" y1="0" x2="0" y2="1"><stop offset="0" stop-color="#fbfbfb"/><stop offset=".7" stop-color="#e2e2e2"/><stop offset="1" stop-color="#bdbdbd"/></linearGradient></defs><rect x="364.5" y="32" width="19" height="13" rx="1" fill="#f2f2f2" stroke="#b4b4b4" stroke-width="0.9"/><rect x="372" y="35" width="9" height="1.2" fill="#cfcfcf"/><rect x="372" y="38" width="9" height="1.2" fill="#d8d8d8"/><path d="M360.5,45.5 Q360.5,43.5 362.5,43.5 L385.5,43.5 Q387.5,43.5 387.5,45.5 L387.5,56 Q387.5,58 385.5,58 L362.5,58 Q360.5,58 360.5,56 Z" fill="url(#gPr)" stroke="#a4a4a4" stroke-width="0.9"/><rect x="362" y="47.5" width="24" height="1" fill="#c8c8c8"/><circle cx="364" cy="49.5" r=".8" fill="#777"/><path d="M372,44 L381.5,52.5" stroke="#7a7a7a" stroke-width="3.6" stroke-linecap="round"/><path d="M372,44 L381,52" stroke="#c4c4c4" stroke-width="1.6" stroke-linecap="round"/><circle cx="369.7" cy="40.7" r="6.6" fill="#f0f0f0" stroke="#a8a8a8" stroke-width="0.9"/><circle cx="369.7" cy="40.7" r="5" fill="#b4cdec" stroke="#4f82c8" stroke-width="1"/><path d="M366.5,39 Q369.5,36 373,38.5" fill="none" stroke="#e4eefa" stroke-width="1.2"/><rect x="403" y="32" width="2" height="2" fill="#9a9a9a"/><rect x="403" y="38" width="2" height="2" fill="#9a9a9a"/><rect x="403" y="44" width="2" height="2" fill="#9a9a9a"/><rect x="403" y="50" width="2" height="2" fill="#9a9a9a"/><rect x="403" y="56" width="2" height="2" fill="#9a9a9a"/><path d="M414.6,37.4 L418.8,42 C422.5,37.5 427,33.8 432,33.8 C438.3,33.8 442.8,38.5 442.8,44.6 C442.8,51.5 436.5,57.2 427.2,57.2 C427,56 429.5,55.4 431.5,54.4 C435.3,52.4 437.2,49.5 437.2,46 C437.2,42.5 434.6,40 431,40 C428.2,40 425.6,42 423,46.4 L427.8,51.8 L414.6,51.8 Z" fill="url(#gGreen)" stroke="#0c7a26" stroke-width="1"/><g transform="translate(903.7,0) scale(-1,1)"><path d="M414.6,37.4 L418.8,42 C422.5,37.5 427,33.8 432,33.8 C438.3,33.8 442.8,38.5 442.8,44.6 C442.8,51.5 436.5,57.2 427.2,57.2 C427,56 429.5,55.4 431.5,54.4 C435.3,52.4 437.2,49.5 437.2,46 C437.2,42.5 434.6,40 431,40 C428.2,40 425.6,42 423,46.4 L427.8,51.8 L414.6,51.8 Z" fill="url(#gGreen)" stroke="#0c7a26" stroke-width="1"/></g><line x1="502.5" y1="26" x2="502.5" y2="66" stroke="#6a6a6a" stroke-width="1" stroke-dasharray="1,2"/><ellipse cx="531" cy="56" rx="13" ry="2" fill="#d4d4d4"/><g transform="translate(531,44) rotate(-42)"><rect x="-15" y="-5" width="30" height="10" rx="1.5" fill="#d81818" stroke="#8a1010" stroke-width="0.8"/><rect x="-15" y="-1.6" width="30" height="3.2" fill="#fff"/><rect x="-15" y="-5" width="8" height="10" fill="#f4f4f4" stroke="#8a8a8a" stroke-width="0.8"/></g><line x1="558.5" y1="26" x2="558.5" y2="66" stroke="#6a6a6a" stroke-width="1" stroke-dasharray="1,2"/><rect x="566" y="25" width="42" height="42" fill="#e8c2c5"/><g stroke="#f05a5a" stroke-width="1.3" opacity=".8"><line x1="566" y1="18" x2="566" y2="76"/><line x1="608" y1="18" x2="608" y2="76"/><line x1="557" y1="25" x2="618" y2="25"/><line x1="557" y1="67" x2="618" y2="67"/></g><circle cx="597" cy="54.5" r="34.5" fill="none" stroke="#a2b8d2" stroke-width="7" opacity=".5"/><circle cx="597" cy="54.5" r="33" fill="none" stroke="#8aa6c6" stroke-width="1" opacity=".35"/><circle cx="597" cy="54.5" r="36" fill="none" stroke="#8aa6c6" stroke-width="1" opacity=".35"/><path d="M585.8,44.5 L586.6,31.6 L590.3,30.9 L589.9,46.2 Z" fill="#efe6e6" stroke="#6a5050" stroke-width="0.9" stroke-linejoin="round"/><path d="M589.2,44.2 L600.3,36 L601.1,39.3 L590.2,47.6 Z" fill="#efe6e6" stroke="#6a5050" stroke-width="0.9" stroke-linejoin="round"/><ellipse cx="579" cy="47.8" rx="5.2" ry="3.3" transform="rotate(-15 579 47.8)" fill="none" stroke="#e01818" stroke-width="2.4"/><ellipse cx="589" cy="55" rx="3.1" ry="5.2" transform="rotate(-5 589 55)" fill="none" stroke="#e01818" stroke-width="2.4"/><path d="M583.5,46 L587.5,45.5 L589.5,49.8" fill="none" stroke="#e01818" stroke-width="2.2"/><path d="M572.8,57.3 h7 M576.3,53.8 v7" stroke="#111" stroke-width="1.1"/><path d="M618.5,30.5 L636,30.5 L639,33.5 L639,55 L618.5,55 Z" fill="#f8f8f8" stroke="#b4b4b4" stroke-width="0.8"/><path d="M626.5,36.5 L647.5,36.5 L647.5,57 L643.5,61.5 L626.5,61.5 Z" fill="#fbfbfb" stroke="#a8a8a8" stroke-width="0.8"/><path d="M643.5,61.5 L643.5,57 L647.5,57 Z" fill="#c8c8c8"/><rect x="630" y="41" width="14" height="1" fill="#d4d4d4"/><rect x="630" y="44" width="14" height="1" fill="#d4d4d4"/><rect x="630" y="47" width="14" height="1" fill="#d4d4d4"/><rect x="630" y="50" width="14" height="1" fill="#d4d4d4"/><path d="M619,58.5 h6 M622,55.5 v6" stroke="#111" stroke-width="1.1"/><rect x="666.5" y="32.5" width="25" height="28" rx="1.5" fill="#c48a2a" stroke="#9a6618" stroke-width="0.8"/><path d="M669.5,36 L688.5,36 L688.5,54 L684,58 L669.5,58 Z" fill="#f8f8f8"/><path d="M684,58 L684,54 L688.5,54 Z" fill="#b8b8b8"/><rect x="672" y="40" width="13" height="1" fill="#cfcfcf"/><rect x="672" y="43" width="13" height="1" fill="#cfcfcf"/><rect x="672" y="46" width="13" height="1" fill="#cfcfcf"/><rect x="672" y="49" width="13" height="1" fill="#cfcfcf"/><rect x="673" y="30" width="12" height="5.5" rx="1.5" fill="#9a9a92" stroke="#6a6a62" stroke-width="0.6"/><rect x="708" y="32" width="2" height="2" fill="#9a9a9a"/><rect x="708" y="38" width="2" height="2" fill="#9a9a9a"/><rect x="708" y="44" width="2" height="2" fill="#9a9a9a"/><rect x="708" y="50" width="2" height="2" fill="#9a9a9a"/><rect x="708" y="56" width="2" height="2" fill="#9a9a9a"/><path d="M725,51 L727,45.5 L740,35.5 L744.5,40 L731.5,50 Z" fill="#e04028" stroke="#7a1a0a" stroke-width="0.8"/><path d="M725,51 L727,45.5 L731.5,50 Z" fill="#f0d8b0"/><path d="M725,51 L726,48.5 L727.5,50 Z" fill="#222"/><path d="M740,35.5 L744.5,40" stroke="#f08080" stroke-width="2.5"/><rect x="723" y="56" width="22" height="1.2" fill="#f00000"/><rect x="765.5" y="35.5" width="29" height="22" fill="#000080" stroke="#000050" stroke-width="1"/><path d="M769,54.5 L791,39 L791,54.5 Z" fill="none" stroke="#fff" stroke-width="1" stroke-dasharray="2.5,1.5"/><rect x="805" y="25" width="43" height="42.5" rx="5" fill="#b6b6b6"/><circle cx="826" cy="45.6" r="13.6" fill="none" stroke="#000" stroke-width="2.2"/><line x1="812" y1="59.5" x2="840" y2="32" stroke="#0000ff" stroke-width="1"/><line x1="855.5" y1="26" x2="855.5" y2="66" stroke="#6a6a6a" stroke-width="1" stroke-dasharray="1,2"/><rect x="862" y="25" width="43" height="42.5" rx="5" fill="#b6b6b6"/><rect x="870" y="33" width="2" height="2" fill="#000"/><rect x="870" y="41" width="2" height="2" fill="#000"/><rect x="870" y="49" width="2" height="2" fill="#000"/><rect x="870" y="57" width="2" height="2" fill="#000"/><rect x="878" y="33" width="2" height="2" fill="#000"/><rect x="878" y="41" width="2" height="2" fill="#000"/><rect x="878" y="49" width="2" height="2" fill="#000"/><rect x="878" y="57" width="2" height="2" fill="#000"/><rect x="886" y="33" width="2" height="2" fill="#000"/><rect x="886" y="41" width="2" height="2" fill="#000"/><rect x="886" y="49" width="2" height="2" fill="#000"/><rect x="886" y="57" width="2" height="2" fill="#000"/><rect x="894" y="33" width="2" height="2" fill="#000"/><rect x="894" y="41" width="2" height="2" fill="#000"/><rect x="894" y="49" width="2" height="2" fill="#000"/><rect x="894" y="57" width="2" height="2" fill="#000"/><line x1="911.5" y1="26" x2="911.5" y2="66" stroke="#6a6a6a" stroke-width="1" stroke-dasharray="1,2"/><path d="M943,49 L952,58" stroke="#6a6a6a" stroke-width="4.5" stroke-linecap="round"/><path d="M943,49 L951,57" stroke="#9a9a9a" stroke-width="2" stroke-linecap="round"/><circle cx="936" cy="42" r="11.5" fill="#e8e8e0" stroke="#b8b8b0" stroke-width="1"/><circle cx="936" cy="42" r="9.5" fill="url(#gMag)" stroke="#5a8cc8" stroke-width="0.8"/><path d="M930.5,42 h11 M936,36.5 v11" stroke="#fff" stroke-width="3"/><path d="M989,49 L998,58" stroke="#6a6a6a" stroke-width="4.5" stroke-linecap="round"/><path d="M989,49 L997,57" stroke="#9a9a9a" stroke-width="2" stroke-linecap="round"/><circle cx="982" cy="42" r="11.5" fill="#e8e8e0" stroke="#b8b8b0" stroke-width="1"/><circle cx="982" cy="42" r="9.5" fill="url(#gMag)" stroke="#5a8cc8" stroke-width="0.8"/><rect x="976" y="40.5" width="12" height="3" fill="#fff"/><path d="M1035,49 L1044,58" stroke="#6a6a6a" stroke-width="4.5" stroke-linecap="round"/><path d="M1035,49 L1043,57" stroke="#9a9a9a" stroke-width="2" stroke-linecap="round"/><circle cx="1028" cy="42" r="11.5" fill="#e8e8e0" stroke="#b8b8b0" stroke-width="1"/><circle cx="1028" cy="42" r="9.5" fill="url(#gMag)" stroke="#5a8cc8" stroke-width="0.8"/><rect x="1024.5" y="38.5" width="7" height="7" fill="#a8c4ec"/><path d="M1022.5,39.5 v-3 h3 M1030.5,36.5 h3 v3 M1033.5,44.5 v3 h-3 M1025.5,47.5 h-3 v-3" fill="none" stroke="#fff" stroke-width="2"/><path d="M1081,49 L1090,58" stroke="#6a6a6a" stroke-width="4.5" stroke-linecap="round"/><path d="M1081,49 L1089,57" stroke="#9a9a9a" stroke-width="2" stroke-linecap="round"/><circle cx="1074" cy="42" r="11.5" fill="#e8e8e0" stroke="#b8b8b0" stroke-width="1"/><circle cx="1074" cy="42" r="9.5" fill="url(#gMag)" stroke="#5a8cc8" stroke-width="0.8"/><rect x="1070" y="38" width="8" height="8" fill="#a8c4ec"/><path d="M1068.5,39.5 v-3 h3 M1076.5,36.5 h3 v3 M1079.5,44.5 v3 h-3 M1071.5,47.5 h-3 v-3" fill="none" stroke="#e00000" stroke-width="2.4"/><path d="M1127,49 L1136,58" stroke="#6a6a6a" stroke-width="4.5" stroke-linecap="round"/><path d="M1127,49 L1135,57" stroke="#9a9a9a" stroke-width="2" stroke-linecap="round"/><circle cx="1120" cy="42" r="11.5" fill="#e8e8e0" stroke="#b8b8b0" stroke-width="1"/><circle cx="1120" cy="42" r="9.5" fill="url(#gMag)" stroke="#5a8cc8" stroke-width="0.8"/><path d="M1114,42 L1119,37 L1119,40 L1126,40 L1126,44 L1119,44 L1119,47 Z" fill="#fff"/><rect x="1154.5" y="30.5" width="28" height="18" fill="#fff" stroke="#7aa0d8" stroke-width="1"/><g transform="translate(1168,47) scale(.8) translate(-1168,-47)"><path d="M1175,54 L1184,63" stroke="#6a6a6a" stroke-width="4.5" stroke-linecap="round"/><path d="M1175,54 L1183,62" stroke="#9a9a9a" stroke-width="2" stroke-linecap="round"/><circle cx="1168" cy="47" r="11.5" fill="#e8e8e0" stroke="#b8b8b0" stroke-width="1"/><circle cx="1168" cy="47" r="9.5" fill="url(#gMag)" stroke="#5a8cc8" stroke-width="0.8"/></g><path d="M1220,49 L1229,58" stroke="#6a6a6a" stroke-width="4.5" stroke-linecap="round"/><path d="M1220,49 L1228,57" stroke="#9a9a9a" stroke-width="2" stroke-linecap="round"/><circle cx="1213" cy="42" r="11.5" fill="#e8e8e0" stroke="#b8b8b0" stroke-width="1"/><circle cx="1213" cy="42" r="9.5" fill="url(#gMag)" stroke="#5a8cc8" stroke-width="0.8"/><path d="M1213,30 l-3.5,4 h2.2 v6 h-6 v-2.2 l-4,3.5 4,3.5 v-2.2 h6 v6 h-2.2 l3.5,4 3.5,-4 h-2.2 v-6 h6 v2.2 l4,-3.5 -4,-3.5 v2.2 h-6 v-6 h2.2 z" fill="#fff" stroke="#6a9ad8" stroke-width=".8"/><rect x="7" y="78" width="2" height="2" fill="#9a9a9a"/><rect x="7" y="84" width="2" height="2" fill="#9a9a9a"/><rect x="7" y="90" width="2" height="2" fill="#9a9a9a"/><rect x="7" y="96" width="2" height="2" fill="#9a9a9a"/><rect x="15" y="73" width="43" height="31" rx="5.5" fill="url(#gBtn2)" stroke="#8a8a8a" stroke-width="2"/><path d="M31.00,79.30 L31.00,93.16 L34.19,90.22 L36.54,96.27 L38.90,95.26 L36.71,89.30 L40.91,89.04 Z" fill="#fff" stroke="#222" stroke-width="0.92" stroke-linejoin="round"/><line x1="67.5" y1="71" x2="67.5" y2="105" stroke="#6a6a6a" stroke-width="1" stroke-dasharray="1,2"/></svg>
<svg class="a" style="left:0;top:0;pointer-events:none" width="1500" height="844" viewBox="0 0 1500 844"><defs><linearGradient id="gTB" x1="0" y1="0" x2="0" y2="1"><stop offset="0" stop-color="#fbfbfb"/><stop offset=".22" stop-color="#e6e6e6"/><stop offset=".6" stop-color="#eeeeee"/><stop offset="1" stop-color="#f6f6f6"/></linearGradient><pattern id="hatch" width="3" height="3" patternUnits="userSpaceOnUse" patternTransform="rotate(45)"><rect width="1" height="3" fill="#555"/></pattern></defs><rect x="7" y="116" width="2" height="2" fill="#9c9c9c"/><rect x="13" y="116" width="2" height="2" fill="#9c9c9c"/><rect x="19" y="116" width="2" height="2" fill="#9c9c9c"/><rect x="25" y="116" width="2" height="2" fill="#9c9c9c"/><rect x="31" y="116" width="2" height="2" fill="#9c9c9c"/><rect x="37" y="116" width="2" height="2" fill="#9c9c9c"/><rect x="43" y="116" width="2" height="2" fill="#9c9c9c"/><rect x="49" y="116" width="2" height="2" fill="#9c9c9c"/><rect x="55" y="116" width="2" height="2" fill="#9c9c9c"/><rect x="61" y="116" width="2" height="2" fill="#9c9c9c"/><rect x="1.5" y="122.5" width="34.2" height="34.5" fill="url(#gTB)" stroke="#8e8e8e" stroke-width="1.5"/><rect x="36.2" y="122.5" width="34.2" height="34.5" fill="url(#gTB)" stroke="#8e8e8e" stroke-width="1.5"/><rect x="1.5" y="157.5" width="34.2" height="34.5" fill="url(#gTB)" stroke="#8e8e8e" stroke-width="1.5"/><rect x="36.2" y="157.5" width="34.2" height="34.5" fill="url(#gTB)" stroke="#8e8e8e" stroke-width="1.5"/><rect x="1.5" y="192.5" width="34.2" height="34.5" fill="url(#gTB)" stroke="#8e8e8e" stroke-width="1.5"/><rect x="36.2" y="192.5" width="34.2" height="34.5" fill="url(#gTB)" stroke="#8e8e8e" stroke-width="1.5"/><rect x="1.5" y="227.5" width="34.2" height="34.5" fill="url(#gTB)" stroke="#8e8e8e" stroke-width="1.5"/><rect x="36.2" y="227.5" width="34.2" height="34.5" fill="url(#gTB)" stroke="#8e8e8e" stroke-width="1.5"/><rect x="1.5" y="262.5" width="34.2" height="34.5" fill="url(#gTB)" stroke="#8e8e8e" stroke-width="1.5"/><rect x="1.5" y="305.5" width="34.2" height="34.5" fill="url(#gTB)" stroke="#8e8e8e" stroke-width="1.5"/><rect x="36.2" y="305.5" width="34.2" height="34.5" fill="url(#gTB)" stroke="#8e8e8e" stroke-width="1.5"/><rect x="1.5" y="340.5" width="34.2" height="34.5" fill="url(#gTB)" stroke="#8e8e8e" stroke-width="1.5"/><rect x="1.5" y="383.5" width="34.2" height="34.5" fill="url(#gTB)" stroke="#8e8e8e" stroke-width="1.5"/><rect x="36.2" y="383.5" width="34.2" height="34.5" fill="url(#gTB)" stroke="#8e8e8e" stroke-width="1.5"/><rect x="1.5" y="418.5" width="34.2" height="34.5" fill="url(#gTB)" stroke="#8e8e8e" stroke-width="1.5"/><rect x="36.2" y="418.5" width="34.2" height="34.5" fill="url(#gTB)" stroke="#8e8e8e" stroke-width="1.5"/><rect x="1.5" y="461.5" width="34.2" height="34.5" fill="url(#gTB)" stroke="#8e8e8e" stroke-width="1.5"/><path d="M8,131.5 h7.5 M11.75,127.75 v7.5 M21.8,140.5 h7.5 M25.55,136.75 v7.5 M8.8,146.5 h7.5 M12.55,142.75 v7.5" fill="none" stroke="#222" stroke-width="1.3"/><path d="M26.4,152 L31,152 L31,147.4 Z" fill="#000"/><path d="M41.8,144.7 L65,134" fill="none" stroke="#222" stroke-width="1.3"/><path d="M61.199999999999996,152 L65.8,152 L65.8,147.4 Z" fill="#000"/><path d="M7.8,183.3 A19.5,19.5 0 0 1 27.2,163.6" fill="none" stroke="#222" stroke-width="1.3"/><path d="M26.4,187 L31,187 L31,182.4 Z" fill="#000"/><circle cx="52.4" cy="173.4" r="9.9" fill="none" stroke="#222" stroke-width="1.3"/><path d="M61.199999999999996,187 L65.8,187 L65.8,182.4 Z" fill="#000"/><ellipse cx="17.8" cy="208.8" rx="13.2" ry="5.6" transform="rotate(-42 17.8 208.8)" fill="none" stroke="#222" stroke-width="1.3"/><path d="M26.4,222 L31,222 L31,217.4 Z" fill="#000"/><path d="M42.2,200.6 C40.8,206 45,219.5 48.5,218.8 C51.5,218 56,204.5 59.5,199.5 C61.5,197 64.5,204 64,209.5 C63.6,212.5 60,211 55.5,207.5 C51,204 43.5,197.5 42.2,200.6 Z" fill="none" stroke="#222" stroke-width="1.3"/><path d="M61.199999999999996,222 L65.8,222 L65.8,217.4 Z" fill="#000"/><path d="M12.7,238.8 A4.7,4.7 0 0 0 12.7,248.2 L27.6,248.2" fill="none" stroke="#222" stroke-width="1.3"/><path d="M26.4,257 L31,257 L31,252.4 Z" fill="#000"/><path d="M40.8,238.3 L44.2,232.3 L51,232.3 L54.4,238.3 L51,244.3 L44.2,244.3 Z" fill="none" stroke="#222" stroke-width="1.3"/><path d="M55.5,245.5 L66,245.5 L60.7,236.5 Z" fill="none" stroke="#222" stroke-width="1.3"/><rect x="41" y="248.3" width="14.8" height="7.5" rx="0.8" fill="none" stroke="#222" stroke-width="1.3"/><path d="M61.199999999999996,257 L65.8,257 L65.8,252.4 Z" fill="#000"/><path d="M7.5,286.5 L7.5,278.5 L13.2,272.2 L28.6,272.2 L28.6,286.5 Z" fill="url(#hatch)" stroke="#222" stroke-width="1.3"/><circle cx="20.5" cy="279.8" r="3.2" fill="#f0f0f0" stroke="#222" stroke-width="1.2"/><path d="M26.4,292 L31,292 L31,287.4 Z" fill="#000"/><text x="18" y="331.7" font-family="Liberation Serif" font-size="28.5" text-anchor="middle" fill="#111">A</text><path d="M43.3,314 v15.8 M61.6,314 v15.8" stroke="#222" stroke-width="1.4"/><path d="M44,316.3 h17" stroke="#222" stroke-width="1"/><path d="M44,316.3 l3.5,-2 v4 z M61,316.3 l-3.5,-2 v4 z" fill="#111"/><path d="M61.199999999999996,335 L65.8,335 L65.8,330.4 Z" fill="#000"/><rect x="7.3" y="349" width="21" height="16" fill="#fff" stroke="#222" stroke-width="1.5"/><path d="M10,362.5 L10,358 L13,355 L16,358 L20,354 L26,360 L26,362.5 Z" fill="#000"/><circle cx="24.4" cy="352.4" r="1.5" fill="#000"/><path d="M5.5,389 L5.5,408.5 L24,408.5 Z" fill="#fff" stroke="#222" stroke-width="1.3"/><path d="M9.5,399 L9.5,404.5 L15,404.5 Z" fill="none" stroke="#222" stroke-width="1.1"/><path d="M25.5,388 L23,403 M25.5,388 L28,403" stroke="#222" stroke-width="1.2"/><circle cx="25.5" cy="388" r="1.2" fill="#222"/><path d="M10,388 L12,385.5 L20,392.5 L18.5,394 Z" fill="#e03030" stroke="#901010" stroke-width=".6"/><path d="M18.5,394 L20,392.5 L21,395 Z" fill="#f0d8b0"/><path d="M26.4,413 L31,413 L31,408.4 Z" fill="#000"/><rect x="41.5" y="395.5" width="23" height="8.5" rx="1.5" fill="#fff" stroke="#444" stroke-width="1"/><path d="M44,396 v3" stroke="#444" stroke-width=".6"/><path d="M46,396 v2" stroke="#444" stroke-width=".6"/><path d="M48,396 v3" stroke="#444" stroke-width=".6"/><path d="M50,396 v2" stroke="#444" stroke-width=".6"/><path d="M52,396 v3" stroke="#444" stroke-width=".6"/><path d="M54,396 v2" stroke="#444" stroke-width=".6"/><path d="M56,396 v3" stroke="#444" stroke-width=".6"/><path d="M58,396 v2" stroke="#444" stroke-width=".6"/><path d="M60,396 v3" stroke="#444" stroke-width=".6"/><path d="M62,396 v2" stroke="#444" stroke-width=".6"/><rect x="7.5" y="425.5" width="17" height="12.5" fill="#fbeec0" stroke="#333" stroke-width="1"/><circle cx="22.4" cy="437.3" r="7" fill="#fbeec0" fill-opacity=".9" stroke="#333" stroke-width="1"/><path d="M7.5,425.5 h17 v12.5" fill="none" stroke="#333" stroke-width="1"/><circle cx="7.8" cy="438" r="1.5" fill="#f02020"/><path d="M41.6,433.7 L59,424" stroke="#f02020" stroke-width="1.2"/><path d="M51.3,429.3 L51.3,442.5 L54.2,439.6 L56.5,444.5 L58.5,443.6 L56.3,438.8 L60.2,438.8 Z" fill="#f4f4f4" stroke="#777" stroke-width=".9"/><path d="M61.199999999999996,448 L65.8,448 L65.8,443.4 Z" fill="#000"/><path d="M7.5,473 L18.5,467.2 L28.5,472 L28.5,483 L17.5,488.6 L7.5,483.5 Z M7.5,473 L17.5,478 L28.5,472 M17.5,478 L17.5,488.6" fill="none" stroke="#222" stroke-width="1.2" stroke-linejoin="round"/><path d="M26.4,491 L31,491 L31,486.4 Z" fill="#000"/><rect x="1463" y="116" width="2" height="2" fill="#a0a0a0"/><rect x="1469" y="116" width="2" height="2" fill="#a0a0a0"/><rect x="1475" y="116" width="2" height="2" fill="#a0a0a0"/><rect x="1481" y="116" width="2" height="2" fill="#a0a0a0"/><rect x="1487" y="116" width="2" height="2" fill="#a0a0a0"/><rect x="1456.5" y="120.3" width="43" height="42" rx="5" fill="#b6b6b6"/><rect x="1463.5" y="127.5" width="27" height="27" fill="#fff" stroke="#222" stroke-width="1"/><rect x="1463" y="127" width="28" height="4" fill="#000"/><rect x="1464.5" y="127.8" width="2.6" height="2.6" fill="#fff"/><path d="M1474,140 L1482,137 L1482,148 L1474,151 Z" fill="#888" stroke="#555" stroke-width=".6"/><path d="M1476.5,139 L1486,135.5 L1486,146.5 L1476.5,150 Z" fill="#fff" stroke="#777" stroke-width=".6"/><path d="M1479.5,147.5 L1483.5,140.5 L1484,146 Z" fill="none" stroke="#e03030" stroke-width=".8"/><rect x="1463.5" y="174.5" width="27" height="27" fill="#fff" stroke="#222" stroke-width="1"/><rect x="1463" y="174" width="28" height="4" fill="#000"/><rect x="1464.5" y="174.8" width="2.6" height="2.6" fill="#fff"/><rect x="1470" y="183" width="11" height="8" fill="#fbeec0" stroke="#777" stroke-width=".7"/><circle cx="1478.5" cy="191" r="4.5" fill="#fbeec0" fill-opacity=".8" stroke="#777" stroke-width=".7"/><rect x="1463.5" y="220.5" width="27" height="27" fill="#fff" stroke="#222" stroke-width="1"/><rect x="1463" y="220" width="28" height="4" fill="#000"/><rect x="1464.5" y="220.8" width="2.6" height="2.6" fill="#fff"/><rect x="1468.5" y="229.5" width="17" height="12" rx="2" fill="#f4f4f4" stroke="#bcd0ec" stroke-width="1"/><line x1="1458" y1="261" x2="1498" y2="261" stroke="#777" stroke-width="1" stroke-dasharray="1,2"/><rect x="1463.5" y="276.5" width="27" height="27" fill="#fff" stroke="#222" stroke-width="1"/><rect x="1463" y="276" width="28" height="4" fill="#000"/><rect x="1464.5" y="276.8" width="2.6" height="2.6" fill="#fff"/><rect x="1467" y="282" width="3" height="2.5" fill="#000"/><rect x="1472.5" y="281.8" width="13" height="3" fill="none" stroke="#444" stroke-width=".7"/><rect x="1467" y="287" width="3" height="2.5" fill="#000"/><rect x="1472.5" y="286.8" width="13" height="3" fill="none" stroke="#444" stroke-width=".7"/><rect x="1467" y="292" width="3" height="2.5" fill="#000"/><rect x="1472.5" y="291.8" width="13" height="3" fill="none" stroke="#444" stroke-width=".7"/><rect x="1463.5" y="322.5" width="27" height="27" fill="#fff" stroke="#222" stroke-width="1"/><rect x="1463" y="322" width="28" height="4" fill="#000"/><rect x="1464.5" y="322.8" width="2.6" height="2.6" fill="#fff"/><path d="M1470.5,331.5 L1484.5,331.5 L1479.5,338.5 L1479.5,345.5 L1476.5,343.5 L1476.5,338.5 Z" fill="#aaa" stroke="#555" stroke-width=".8"/><rect x="1463.5" y="368.5" width="27" height="27" fill="#fff" stroke="#222" stroke-width="1"/><rect x="1463" y="368" width="28" height="4" fill="#000"/><rect x="1464.5" y="368.8" width="2.6" height="2.6" fill="#fff"/><path d="M1470.5,374.5 L1475.5,379 L1475.5,387 L1470.5,391.5 Z" fill="#fff" stroke="#444" stroke-width=".8"/><rect x="1475.5" y="378.5" width="9" height="9" fill="#ccc" stroke="#555" stroke-width=".7"/><line x1="1466" y1="383" x2="1490" y2="383" stroke="#e88" stroke-width=".6" stroke-dasharray="2,1"/><line x1="1458" y1="410" x2="1498" y2="410" stroke="#777" stroke-width="1" stroke-dasharray="1,2"/><rect x="1456.5" y="417" width="43" height="42.5" rx="5" fill="#b6b6b6"/><rect x="1463.5" y="425.5" width="27" height="27" fill="#fff" stroke="#222" stroke-width="1"/><rect x="1463" y="425" width="28" height="4" fill="#000"/><rect x="1464.5" y="425.8" width="2.6" height="2.6" fill="#fff"/><rect x="1466" y="431" width="10" height=".8" fill="#888"/><rect x="1466" y="434" width="13" height=".8" fill="#888"/><rect x="1466" y="437" width="10" height=".8" fill="#888"/><rect x="1466" y="440" width="13" height=".8" fill="#888"/><line x1="1463" y1="448.5" x2="1491" y2="448.5" stroke="#444" stroke-width=".6"/><rect x="1474" y="449.5" width="12" height=".9" fill="#666"/><rect x="1463.5" y="471.5" width="27" height="27" fill="#fff" stroke="#222" stroke-width="1"/><rect x="1463" y="471" width="28" height="4" fill="#000"/><rect x="1464.5" y="471.8" width="2.6" height="2.6" fill="#fff"/><rect x="1471" y="479" width="12" height="15" rx="1" fill="#c48a2a"/><rect x="1473" y="481.5" width="8" height="11" fill="#f6f6f6"/><rect x="1474" y="477.5" width="6" height="3" fill="#8a8a82"/><circle cx="1164" cy="118" r="6.8" fill="#707070"/><path d="M1161.3,115.3 L1166.7,120.7 M1166.7,115.3 L1161.3,120.7" stroke="#fff" stroke-width="1.8"/><circle cx="1182" cy="118" r="6.8" fill="#707070"/><rect x="1178.8" y="117" width="4.8" height="4" fill="none" stroke="#fff" stroke-width="1"/><path d="M1180.5,117 v-1.8 h4.8 v4 h-1.7" fill="none" stroke="#fff" stroke-width="1"/><path d="M1177.1,143.4 C1180.0,135.4 1189.0,135.4 1191.9,143.4 C1189.0,150.0 1180.0,150.0 1177.1,143.4 Z" fill="#000"/><circle cx="1184.5" cy="143.6" r="3.7" fill="#fff"/><circle cx="1184.5" cy="143.9" r="2.7" fill="#000"/><circle cx="1183.5" cy="142.6" r="0.9" fill="#fff"/><path d="M1237.1,143.4 C1240.0,135.4 1249.0,135.4 1251.9,143.4 C1249.0,150.0 1240.0,150.0 1237.1,143.4 Z" fill="#b4b4b4"/><circle cx="1244.5" cy="143.6" r="3.7" fill="#fff"/><circle cx="1244.5" cy="143.9" r="2.7" fill="#b4b4b4"/><circle cx="1243.5" cy="142.6" r="0.9" fill="#fff"/><path d="M1298.5,143 h12 M1304.5,137 v12" stroke="#e00000" stroke-width="2.6"/><rect x="1358.5" y="141.8" width="12" height="2.6" fill="#e00000"/><path d="M1418,150 L1432,136" stroke="#8a6010" stroke-width="3.6" stroke-linecap="butt"/><path d="M1418,150 L1432,136" stroke="#f0b840" stroke-width="2.6"/><path d="M1430.4,137.6 L1432,136" stroke="#e02020" stroke-width="3.0"/><path d="M1418,150 L1420.2,147.8" stroke="#444" stroke-width="1.2"/><path d="M1415.1,167.4 C1418.0,159.4 1427.0,159.4 1429.9,167.4 C1427.0,174.0 1418.0,174.0 1415.1,167.4 Z" fill="#000"/><circle cx="1422.5" cy="167.6" r="3.7" fill="#fff"/><circle cx="1422.5" cy="167.9" r="2.7" fill="#000"/><circle cx="1421.5" cy="166.6" r="0.9" fill="#fff"/><path d="M1441.5,166 v-2.5 a3.5,3.5 0 0 1 7,0 v2.5" fill="none" stroke="#bdbdbd" stroke-width="1.6"/><rect x="1440" y="166" width="10" height="7" fill="#bdbdbd"/><path d="M1415.1,187.4 C1418.0,179.4 1427.0,179.4 1429.9,187.4 C1427.0,194.0 1418.0,194.0 1415.1,187.4 Z" fill="#000"/><circle cx="1422.5" cy="187.6" r="3.7" fill="#fff"/><circle cx="1422.5" cy="187.9" r="2.7" fill="#000"/><circle cx="1421.5" cy="186.6" r="0.9" fill="#fff"/><path d="M1441.5,186 v-2.5 a3.5,3.5 0 0 1 7,0 v2.5" fill="none" stroke="#bdbdbd" stroke-width="1.6"/><rect x="1440" y="186" width="10" height="7" fill="#bdbdbd"/><path d="M1415.1,207.4 C1418.0,199.4 1427.0,199.4 1429.9,207.4 C1427.0,214.0 1418.0,214.0 1415.1,207.4 Z" fill="#000"/><circle cx="1422.5" cy="207.6" r="3.7" fill="#fff"/><circle cx="1422.5" cy="207.9" r="2.7" fill="#000"/><circle cx="1421.5" cy="206.6" r="0.9" fill="#fff"/><path d="M1441.5,206 v-2.5 a3.5,3.5 0 0 1 7,0 v2.5" fill="none" stroke="#bdbdbd" stroke-width="1.6"/><rect x="1440" y="206" width="10" height="7" fill="#bdbdbd"/><path d="M1415.1,227.4 C1418.0,219.4 1427.0,219.4 1429.9,227.4 C1427.0,234.0 1418.0,234.0 1415.1,227.4 Z" fill="#000"/><circle cx="1422.5" cy="227.6" r="3.7" fill="#fff"/><circle cx="1422.5" cy="227.9" r="2.7" fill="#000"/><circle cx="1421.5" cy="226.6" r="0.9" fill="#fff"/><path d="M1441.5,226 v-2.5 a3.5,3.5 0 0 1 7,0 v2.5" fill="none" stroke="#bdbdbd" stroke-width="1.6"/><rect x="1440" y="226" width="10" height="7" fill="#bdbdbd"/><path d="M1394.8,233.3 L1407.8,220.3" stroke="#8a6010" stroke-width="3.4" stroke-linecap="butt"/><path d="M1394.8,233.3 L1407.8,220.3" stroke="#f0b840" stroke-width="2.4"/><path d="M1406.2,221.9 L1407.8,220.3" stroke="#e02020" stroke-width="2.8"/><path d="M1394.8,233.3 L1397.0,231.10000000000002" stroke="#444" stroke-width="1.2"/><path d="M79.5,116.5 L87.5,124.5 M87.5,116.5 L79.5,124.5" stroke="#707070" stroke-width="1.2"/><defs><radialGradient id="gApp" cx=".4" cy=".35"><stop offset="0" stop-color="#fff"/><stop offset=".7" stop-color="#dfe6f0"/><stop offset="1" stop-color="#9aaccc"/></radialGradient></defs><circle cx="102" cy="118.5" r="6.2" fill="url(#gApp)" stroke="#2b4690" stroke-width="2"/><path d="M98.5,116 l3.5,3 M100,113.8 l1,1.5 M97,118.5 h1.5" stroke="#c66" stroke-width=".7"/><path d="M102.5,119.5 L107.5,124.5" stroke="#f0b020" stroke-width="2.2"/><path d="M106.5,123.5 L108,125" stroke="#e05050" stroke-width="2.2"/><path d="M597.00,55.30 L597.00,77.80 L602.30,72.90 L605.80,81.30 L609.40,79.70 L605.90,71.50 L612.80,71.50 Z" fill="#111" stroke="#fff" stroke-width="1.6" stroke-linejoin="round" transform="translate(0,0)"/><path d="M597.00,55.30 L597.00,77.80 L602.30,72.90 L605.80,81.30 L609.40,79.70 L605.90,71.50 L612.80,71.50 Z" fill="#fff" stroke="#111" stroke-width="1.1" stroke-linejoin="round"/><rect x="1133.5" y="780.5" width="13" height="9" fill="#eee" stroke="#111" stroke-width="1"/><rect x="1133" y="780" width="14" height="2.8" fill="#000"/><rect x="1143" y="780.8" width="1" height="1" fill="#999"/><path d="M719,814 Q719,806 727,806 Q735,806 735,814 L735,828 Q735,836 727,836 Q719,836 719,828 Z" fill="#fff" stroke="#333" stroke-width="1"/><path d="M719,818 Q727,815.5 735,818" fill="none" stroke="#333" stroke-width="1"/><rect x="725.5" y="808" width="3" height="8" rx="1.5" fill="none" stroke="#333" stroke-width=".9"/><line x1="727" y1="806" x2="727" y2="818" stroke="#333" stroke-width=".8"/><circle cx="508.7" cy="822" r="3" fill="#c6c6c6"/><circle cx="943.6" cy="822" r="3" fill="#c6c6c6"/><circle cx="1272.6" cy="822" r="3" fill="#c6c6c6"/></svg>
<div class="a" style="left:582px;top:81px;width:181px;height:25px;background:linear-gradient(#fbfcfe,#e4e9f1);border:1px solid #c9cdd3;border-radius:2px;box-shadow:1px 1px 1px rgba(0,0,0,.35)"></div>
<div class="t" style="left:587px;top:87px;font-size:14px;color:#111;-webkit-text-stroke:.15px #111">Ausschneiden mit Referenz</div>
</body></html>
